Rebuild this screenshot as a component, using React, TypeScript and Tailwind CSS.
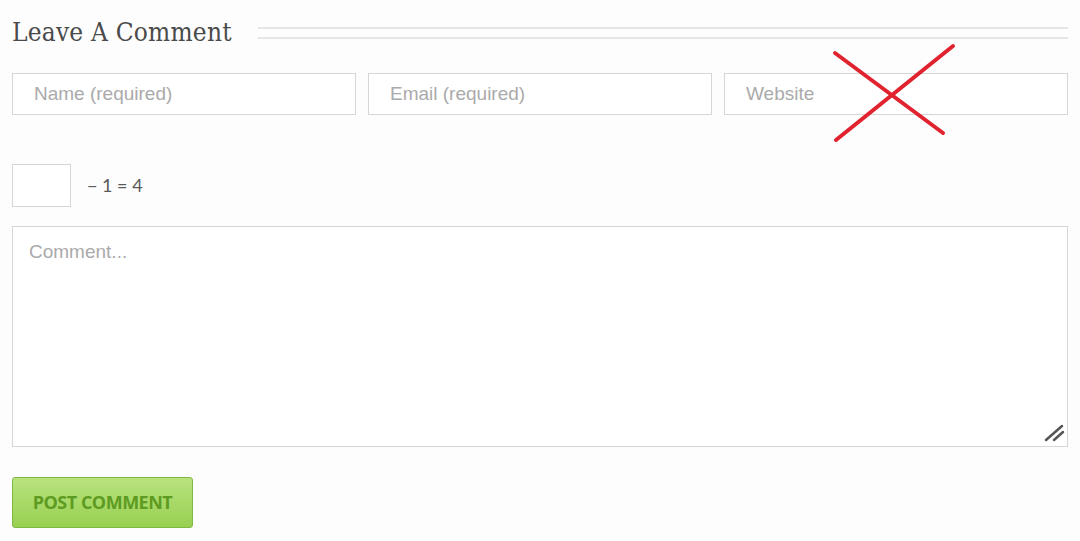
import React from "react";

export default function App() {
  const inputCls =
    "h-[42px] flex-1 border border-[#d6d6d6] bg-white pl-[21px] text-[19px] text-[#555] placeholder:text-[#aaa] outline-none";
  return (
    <div className="relative w-[1080px] h-[541px] overflow-hidden bg-[#fdfdfd] px-3" style={{ fontFamily: '"Liberation Sans", Arial, sans-serif' }}>
      <div className="flex items-center pt-[15px] h-[48px]">
        <h2 className="w-[246px] text-[26px] leading-none text-[#4a4a4a] tracking-[0.2px] font-stretch-condensed" style={{ fontFamily: '"DejaVu Serif", "Liberation Serif", serif', fontWeight: 300 }}>
          Leave A Comment
        </h2>
        <div className="flex-1 flex flex-col gap-[8px] mt-[3px]">
          <div className="h-[2px] bg-[#e6e6e6]" />
          <div className="h-[2px] bg-[#e6e6e6]" />
        </div>
      </div>
      <div className="mt-[25px] flex gap-3">
        <input className={inputCls} placeholder="Name (required)" />
        <input className={inputCls} placeholder="Email (required)" />
        <input className={inputCls} placeholder="Website" />
      </div>
      <div className="mt-[49px] flex items-center">
        <input className="h-[43px] w-[59px] border border-[#d6d6d6] bg-white outline-none" />
        <span className="ml-[16px] text-[18px] text-[#5a5a5a]" style={{ fontFamily: 'Lato, "Liberation Sans", sans-serif' }}>
          − 1 = 4
        </span>
      </div>
      <textarea
        className="mt-[19px] block w-full h-[221px] border border-[#d6d6d6] bg-white px-4 pt-[11px] text-[19px] text-[#555] placeholder:text-[#aaa] outline-none resize-none"
        placeholder="Comment..."
      />
      <svg className="absolute left-[1043px] top-[422px]" width="24" height="20" viewBox="0 0 24 20">
        <line x1="3" y1="18" x2="19" y2="4" stroke="#555" strokeWidth="2.5" strokeLinecap="round" />
        <line x1="11" y1="18" x2="20" y2="10" stroke="#555" strokeWidth="2.5" strokeLinecap="round" />
      </svg>
      <button
        className="mt-[30px] h-[51px] w-[181px] rounded-[3px] border border-[#7fb845] bg-gradient-to-b from-[#b8e37e] to-[#98d050] text-[18px] font-bold text-[#5e9b22] tracking-[-0.5px]"
        style={{ fontFamily: '"Open Sans", Roboto, sans-serif' }}
      >
        POST COMMENT
      </button>
      <svg className="absolute left-0 top-0 pointer-events-none" width="1080" height="541">
        <line x1="835" y1="53" x2="943" y2="133" stroke="#e0232f" strokeWidth="4" strokeLinecap="round" />
        <line x1="953" y1="46" x2="836" y2="140" stroke="#e0232f" strokeWidth="4" strokeLinecap="round" />
      </svg>
    </div>
  );
}
